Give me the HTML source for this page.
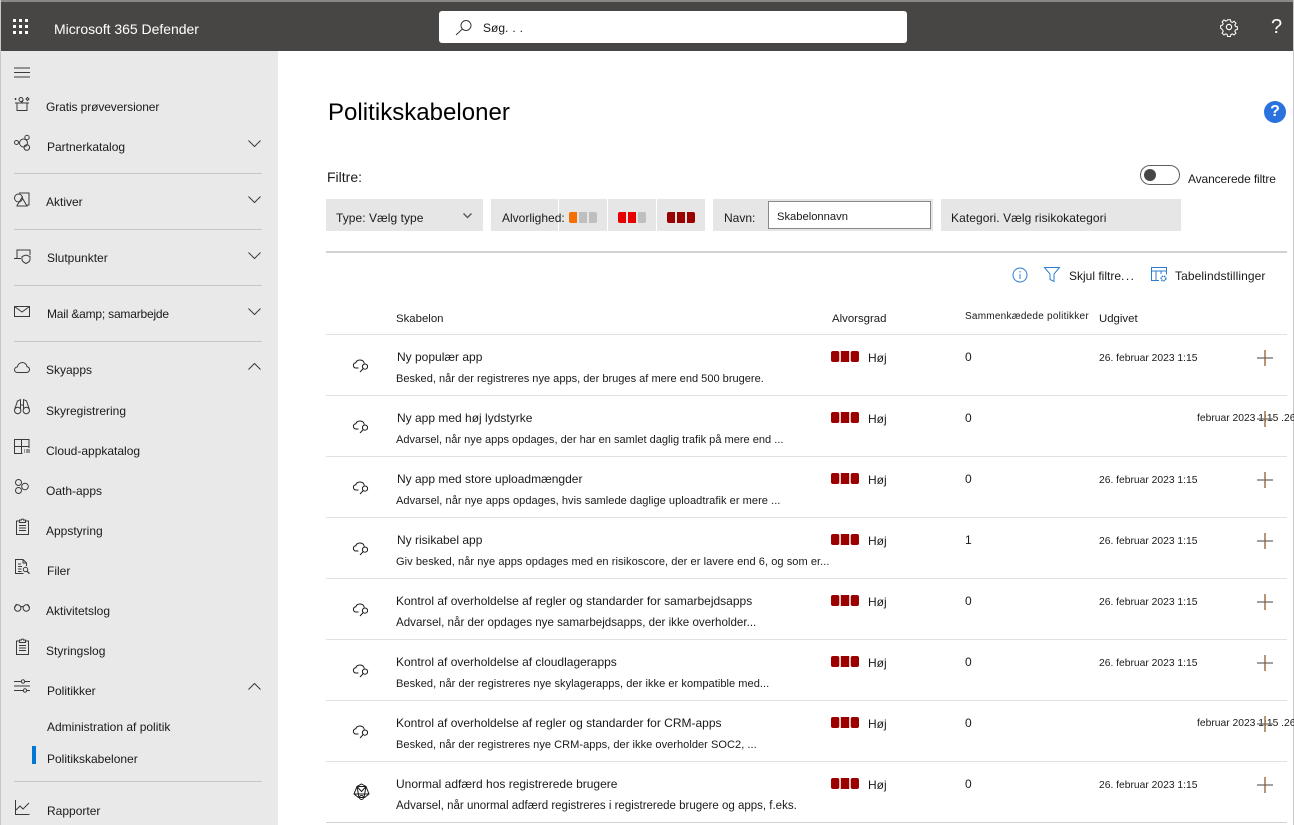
<!DOCTYPE html>
<html lang="da">
<head>
<meta charset="utf-8">
<title>Politikskabeloner</title>
<style>
html,body{margin:0;padding:0;background:#fff}
body{width:1294px;height:825px;position:relative;overflow:hidden;font-family:"Liberation Sans",sans-serif;font-size:12px;color:#1b1a19}
.a{position:absolute;white-space:nowrap;line-height:16px}
.b{position:absolute}
svg{position:absolute;overflow:visible;fill:none;stroke:#3b3a39;stroke-width:1}
.nav{left:46px}
.div{position:absolute;left:14px;width:248px;height:1px;background:#c8c6c4}
.sep{position:absolute;left:326px;width:961px;height:1px;background:#e1e1e1}
.f{position:absolute;top:199px;height:32px;background:#e6e6e6}
.sq{position:absolute;width:8px;height:11px;background:#9b0000}
.d{font-size:11.05px;margin-top:1px}
.t{font-size:10.3px;margin-top:1px}
.h{font-size:11.4px;margin-top:1px}
</style>
</head>
<body>
<!-- frame -->
<div class="b" style="left:0;top:0;width:1294px;height:2px;background:#8a8886"></div>
<div class="b" style="left:0;top:0;width:1px;height:825px;background:#c8c8c8"></div>
<div class="b" style="left:1293px;top:0;width:1px;height:825px;background:#c8c8c8"></div>
<!-- header -->
<div class="b" style="left:1px;top:2px;width:1292px;height:49px;background:#484644"></div>
<div class="b" style="left:13px;top:19px;width:3px;height:3px;background:#fff;box-shadow:6px 0 #fff,12px 0 #fff,0 6px #fff,6px 6px #fff,12px 6px #fff,0 12px #fff,6px 12px #fff,12px 12px #fff"></div>
<div class="a" style="left:54px;top:21px;color:#fff;font-size:14px;letter-spacing:-.03px">Microsoft 365 Defender</div>
<div class="b" style="left:439px;top:11px;width:468px;height:32px;background:#fff;border-radius:3px"></div>
<svg style="left:455px;top:19px" width="18" height="18" viewBox="0 0 18 18"><circle cx="11" cy="6.500" r="5"/><path d="M7.400 10 1 16"/></svg>
<div class="a" style="left:483px;top:20px;font-size:12px;color:#1b1a19">Søg<span style="letter-spacing:4px">...</span></div>
<svg style="left:1220px;top:18px;stroke:#fff;stroke-width:1.200" width="18" height="18" viewBox="0 0 18 18"><circle cx="9" cy="9" r="2.600"/><path d="M7.400 1h3.200l.5 2.300 1.600.7 2-1.300 2.200 2.200-1.300 2 .7 1.600 2.200.5v3l-2.200.5-.7 1.600 1.300 2-2.200 2.200-2-1.300-1.600.7-.5 2.300H7.400l-.5-2.300-1.600-.7-2 1.300-2.200-2.200 1.300-2-.7-1.600L-.5 10.500v-3l2.200-.5.7-1.600-1.300-2 2.200-2.200 2 1.300 1.600-.7z" transform="translate(1.100 .9) scale(.88)"/></svg>
<div class="a" style="left:1271px;top:17px;color:#fff;font-size:20px;line-height:20px">?</div>

<!-- sidebar -->
<div class="b" style="left:1px;top:51px;width:277px;height:774px;background:#e9e9e9"></div>
<svg style="left:14px;top:67px" width="16" height="11" viewBox="0 0 16 11"><path d="M0 1h16M0 5.500h16M0 10h16"/></svg>

<svg style="left:14px;top:96px" width="16" height="16" viewBox="0 0 16 16"><path d="M1 7h14M3 7v7.500h10V7M.5 3h2M1.500 2v2M12 3l1.500-1.500L15 3l-1.500 1.500z"/><circle cx="7" cy="3.500" r="2"/><path d="M9 3.500c0 2-1 3-2 3"/></svg>
<div class="a nav" style="top:99px;letter-spacing:-.1px">Gratis prøveversioner</div>

<svg style="left:14px;top:135px" width="16" height="17" viewBox="0 0 16 17"><circle cx="2.500" cy="7.500" r="2"/><circle cx="9.500" cy="8" r="4"/><circle cx="13" cy="2.500" r="2.200"/><circle cx="12.800" cy="12.500" r="2.800"/></svg>
<div class="a" style="left:47px;top:139px">Partnerkatalog</div>
<svg style="left:248px;top:140px" width="13" height="7" viewBox="0 0 13 7"><path d="M.5.500l6 6 6-6"/></svg>
<div class="div" style="top:173px"></div>

<svg style="left:14px;top:192px" width="16" height="16" viewBox="0 0 16 16"><circle cx="4.500" cy="6" r="4"/><path d="M5 1h10v12h-2M3 13.500l5-8 5 8.500H3z"/></svg>
<div class="a nav" style="top:194px">Aktiver</div>
<svg style="left:248px;top:196px" width="13" height="7" viewBox="0 0 13 7"><path d="M.5.500l6 6 6-6"/></svg>
<div class="div" style="top:229px"></div>

<svg style="left:14px;top:249px" width="16" height="16" viewBox="0 0 16 16"><path d="M3 9V1h13v5M0 9.500h7"/><path d="M8 7.500l4-1.500 4 1.500v3c0 2-2 3-4 4-2-1-4-2-4-4z"/></svg>
<div class="a" style="left:47px;top:250px">Slutpunkter</div>
<svg style="left:248px;top:252px" width="13" height="7" viewBox="0 0 13 7"><path d="M.5.500l6 6 6-6"/></svg>
<div class="div" style="top:285px"></div>

<svg style="left:14px;top:306px" width="16" height="12" viewBox="0 0 16 12"><path d="M.5.500h15v10H.5zM.5.500 8 6l7.500-5.500"/></svg>
<div class="a" style="left:47px;top:306px;letter-spacing:-.2px">Mail &amp;amp; samarbejde</div>
<svg style="left:248px;top:308px" width="13" height="7" viewBox="0 0 13 7"><path d="M.5.500l6 6 6-6"/></svg>
<div class="div" style="top:341px"></div>

<svg style="left:14px;top:362px" width="16" height="11" viewBox="0 0 16 11"><path d="M3.500 10.500C1.500 10.500.5 9.200.5 7.800.5 6.200 1.800 5 3.300 5 3.800 2.500 5.800.500 8.300.500c2.600 0 4.400 1.800 4.700 4.200 1.500.2 2.500 1.300 2.500 2.800 0 1.700-1.300 3-3 3z"/></svg>
<div class="a nav" style="top:362px">Skyapps</div>
<svg style="left:248px;top:363px" width="13" height="7" viewBox="0 0 13 7"><path d="M.5 6.500l6-6 6 6"/></svg>

<svg style="left:14px;top:399px" width="16" height="16" viewBox="0 0 16 16"><circle cx="3.700" cy="11.500" r="3.200"/><circle cx="12.300" cy="11.500" r="3.200"/><path d="M.6 10.500 3.500 2 6.500.6v10M15.400 10.500 12.500 2 9.500.6v10M6.500 6h3"/></svg>
<div class="a nav" style="top:403px">Skyregistrering</div>

<svg style="left:14px;top:439px" width="16" height="16" viewBox="0 0 16 16"><path d="M8.500 14.500H.5V.500h14.500v8.500M7.500.500v14M.5 7.500h14.500M10 11h1M12 11h4M10 13h1M12 13h4"/></svg>
<div class="a nav" style="top:443px">Cloud-appkatalog</div>

<svg style="left:14px;top:479px" width="16" height="16" viewBox="0 0 16 16"><circle cx="4.500" cy="3.500" r="3"/><circle cx="4.500" cy="11.500" r="3"/><circle cx="11" cy="7.500" r="3.300"/></svg>
<div class="a nav" style="top:483px">Oath-apps</div>

<svg style="left:16px;top:519px" width="13" height="16" viewBox="0 0 13 16"><path d="M3.500 2H.5v13.500h12V2h-3M3.500 3.500V1h2a1 1 0 0 1 2 0h2v2.500zM3 6.500h7M3 9h7M3 11.500h7"/></svg>
<div class="a nav" style="top:523px">Appstyring</div>

<svg style="left:15px;top:559px" width="16" height="16" viewBox="0 0 16 16"><path d="M8.500 14.500H.5V.500H8l3.500 3.500v3M8 .500v3.500h3.500M3 5h3M3 7.500h4M3 10h3.500M3 12.500h3.500"/><circle cx="10.500" cy="10.500" r="2.200"/><path d="M12 12.200l2.500 2.500" stroke-width="1.300"/></svg>
<div class="a" style="left:47px;top:563px">Filer</div>

<svg style="left:14px;top:603px" width="16" height="9" viewBox="0 0 16 9"><circle cx="3.700" cy="5" r="3.200"/><circle cx="12.300" cy="5" r="3.200"/><path d="M6.800 4c.8-.6 1.600-.6 2.400 0M.5 5 2.500 1M15.500 5l-2-4"/></svg>
<div class="a nav" style="top:603px">Aktivitetslog</div>

<svg style="left:16px;top:639px" width="13" height="16" viewBox="0 0 13 16"><path d="M3.500 2H.5v13.500h12V2h-3M3.500 3.500V1h2a1 1 0 0 1 2 0h2v2.500zM3 6.500h7M3 9h7M3 11.500h7"/></svg>
<div class="a nav" style="top:643px">Styringslog</div>

<svg style="left:14px;top:679px" width="16" height="14" viewBox="0 0 16 14"><path d="M0 2.500h7M11 2.500h5M0 7h16M0 11.500h9M13 11.500h3"/><circle cx="9" cy="2.500" r="1.700"/><circle cx="11" cy="11.500" r="1.700"/></svg>
<div class="a" style="left:47px;top:683px">Politikker</div>
<svg style="left:248px;top:683px" width="13" height="7" viewBox="0 0 13 7"><path d="M.5 6.500l6-6 6 6"/></svg>
<div class="a" style="left:47px;top:719px">Administration af politik</div>
<div class="b" style="left:32px;top:746px;width:4px;height:18px;background:#0078d4"></div>
<div class="a" style="left:47px;top:751px">Politikskabeloner</div>
<div class="div" style="top:781px"></div>
<svg style="left:15px;top:800px" width="15" height="15" viewBox="0 0 15 15"><path d="M.5 0v14.500h14M1 10l4-4 3 3 6-6"/></svg>
<div class="a" style="left:47px;top:803px">Rapporter</div>

<!-- main -->
<div class="a" style="left:328px;top:99px;font-size:24px;line-height:28px;color:#000;letter-spacing:.03px">Politikskabeloner</div>
<div class="b" style="left:1264px;top:101px;width:22px;height:22px;border-radius:50%;background:#2a72de;color:#fff;font-weight:bold;font-size:16px;line-height:22px;text-align:center">?</div>
<div class="a" style="left:327px;top:169px;font-size:14px">Filtre:</div>
<div class="b" style="left:1140px;top:165px;width:38px;height:18px;border:1px solid #605e5c;border-radius:10px"></div>
<div class="b" style="left:1144px;top:169px;width:12px;height:12px;border-radius:50%;background:#484644"></div>
<div class="a" style="left:1188px;top:171px;letter-spacing:-.12px">Avancerede filtre</div>

<div class="f" style="left:326px;width:157px"></div>
<div class="a" style="left:336px;top:210px;letter-spacing:.05px">Type: Vælg type</div>
<svg style="left:463px;top:213px;stroke:#605e5c;stroke-width:1.500" width="9" height="6" viewBox="0 0 9 6"><path d="M.5.500l4 4 4-4"/></svg>

<div class="f" style="left:491px;width:67px"></div>
<div class="f" style="left:559px;width:48px"></div>
<div class="f" style="left:608px;width:48px"></div>
<div class="f" style="left:657px;width:48px"></div>
<div class="a" style="left:502px;top:210px">Alvorlighed:</div>
<div class="sq" style="left:569px;top:212px;background:#f57000;border-radius:2px 0 0 2px"></div>
<div class="sq" style="left:579px;top:212px;background:#bfbfbf"></div>
<div class="sq" style="left:589px;top:212px;background:#bfbfbf;border-radius:0 2px 2px 0"></div>
<div class="sq" style="left:618px;top:212px;background:#e80000;border-radius:2px 0 0 2px"></div>
<div class="sq" style="left:628px;top:212px;background:#e80000"></div>
<div class="sq" style="left:638px;top:212px;background:#bfbfbf;border-radius:0 2px 2px 0"></div>
<div class="sq" style="left:667px;top:212px;border-radius:2px 0 0 2px"></div>
<div class="sq" style="left:677px;top:212px"></div>
<div class="sq" style="left:687px;top:212px;border-radius:0 2px 2px 0"></div>

<div class="f" style="left:713px;width:220px"></div>
<div class="a" style="left:724px;top:210px">Navn:</div>
<div class="b" style="left:768px;top:201px;width:161px;height:26px;background:#fff;border:1px solid #8a8886"></div>
<div class="a" style="left:777px;top:209px;font-size:11.200px">Skabelonnavn</div>
<div class="f" style="left:941px;width:240px"></div>
<div class="a" style="left:951px;top:210px;letter-spacing:.07px">Kategori. Vælg risikokategori</div>
<div class="b" style="left:326px;top:251px;width:961px;height:2px;background:#d2d2d2"></div>

<svg style="left:1012px;top:267px;stroke:#2b7cd3" width="16" height="16" viewBox="0 0 16 16"><circle cx="8" cy="8" r="7"/><path d="M8 7v5M8 4v1.500"/></svg>
<svg style="left:1044px;top:267px;stroke:#2b7cd3" width="16" height="15" viewBox="0 0 16 15"><path d="M.5.500h15L10 7v7.500l-4-2V7z"/></svg>
<div class="a" style="left:1069px;top:268px">Skjul filtre<span style="letter-spacing:1.500px">...</span></div>
<svg style="left:1151px;top:267px;stroke:#2b7cd3" width="16" height="15" viewBox="0 0 16 15"><path d="M8 13.500H.5V.500h15v7M.5 4h15M5 4v9.500M10 4v3"/><circle cx="12.500" cy="11.500" r="2.300" stroke-dasharray="1.500 .7" stroke-width="1.500"/></svg>
<div class="a" style="left:1175px;top:268px;letter-spacing:.1px">Tabelindstillinger</div>

<div class="a h" style="left:396px;top:310px">Skabelon</div>
<div class="a h" style="left:832px;top:310px">Alvorsgrad</div>
<div class="a" style="left:965px;top:309px;font-size:10px;letter-spacing:.24px">Sammenkædede politikker</div>
<div class="a h" style="left:1099px;top:310px">Udgivet</div>

<div class="sep" style="top:334px"></div>
<div class="sep" style="top:395px"></div>
<div class="sep" style="top:456px"></div>
<div class="sep" style="top:517px"></div>
<div class="sep" style="top:578px"></div>
<div class="sep" style="top:639px"></div>
<div class="sep" style="top:700px"></div>
<div class="sep" style="top:761px"></div>
<div class="sep" style="top:822px;background:#d2d2d2"></div>

<svg width="0" height="0" style="left:0;top:0"><defs>
<g id="cl"><path d="M5.500 11H3C1.400 11 .4 9.800.4 8.400.4 7 1.400 6 2.800 5.800 3.300 4 5 3 7 3c2.300 0 3.900 1.400 4.300 3.500"/><circle cx="12" cy="9.600" r="2.600"/><path d="M10.200 11.600 7 15"/></g>
<g id="pl"><path d="M0 8h16" stroke="#6e6e6e" stroke-width="1.300"/><path d="M8 0v16" stroke="#8f5d2c" stroke-width="1.300"/></g>
<g id="hi"><rect x="0" y="0" width="8.300" height="11" rx="2" fill="#9b0000" stroke="none"/><rect x="9.800" y="0" width="8.400" height="11" fill="#9b0000" stroke="none"/><rect x="19.700" y="0" width="8.300" height="11" rx="2" fill="#9b0000" stroke="none"/></g>
</defs></svg>

<!-- row 1 -->
<svg style="left:353px;top:357px;stroke:#1b1a19" width="17" height="16" viewBox="0 0 17 16"><use href="#cl"/></svg>
<div class="a" style="left:397px;top:349px">Ny populær app</div>
<div class="a d" style="left:396px;top:370px">Besked, når der registreres nye apps, der bruges af mere end 500 brugere.</div>
<svg style="left:831px;top:351px" width="28" height="11" viewBox="0 0 28 11"><use href="#hi"/></svg>
<div class="a" style="left:868px;top:350px">Høj</div>
<div class="a" style="left:965px;top:349px">0</div>
<div class="a t" style="left:1099px;top:350px">26. februar 2023 1:15</div>
<svg style="left:1257px;top:350px" width="16" height="16" viewBox="0 0 16 16"><use href="#pl"/></svg>

<!-- row 2 -->
<svg style="left:353px;top:418px;stroke:#1b1a19" width="17" height="16" viewBox="0 0 17 16"><use href="#cl"/></svg>
<div class="a" style="left:397px;top:410px">Ny app med høj lydstyrke</div>
<div class="a d" style="left:396px;top:431px">Advarsel, når nye apps opdages, der har en samlet daglig trafik på mere end ...</div>
<svg style="left:831px;top:412px" width="28" height="11" viewBox="0 0 28 11"><use href="#hi"/></svg>
<div class="a" style="left:868px;top:411px">Høj</div>
<div class="a" style="left:965px;top:410px">0</div>
<div class="a t" style="left:1197px;top:410px">februar 2023 1:15 .26</div>
<svg style="left:1257px;top:411px" width="16" height="16" viewBox="0 0 16 16"><use href="#pl"/></svg>

<!-- row 3 -->
<svg style="left:353px;top:479px;stroke:#1b1a19" width="17" height="16" viewBox="0 0 17 16"><use href="#cl"/></svg>
<div class="a" style="left:397px;top:471px">Ny app med store uploadmængder</div>
<div class="a d" style="left:396px;top:492px;letter-spacing:.04px">Advarsel, når nye apps opdages, hvis samlede daglige uploadtrafik er mere ...</div>
<svg style="left:831px;top:473px" width="28" height="11" viewBox="0 0 28 11"><use href="#hi"/></svg>
<div class="a" style="left:868px;top:472px">Høj</div>
<div class="a" style="left:965px;top:471px">0</div>
<div class="a t" style="left:1099px;top:472px">26. februar 2023 1:15</div>
<svg style="left:1257px;top:472px" width="16" height="16" viewBox="0 0 16 16"><use href="#pl"/></svg>

<!-- row 4 -->
<svg style="left:353px;top:540px;stroke:#1b1a19" width="17" height="16" viewBox="0 0 17 16"><use href="#cl"/></svg>
<div class="a" style="left:397px;top:532px">Ny risikabel app</div>
<div class="a d" style="left:396px;top:553px;letter-spacing:.05px">Giv besked, når nye apps opdages med en risikoscore, der er lavere end 6, og som er...</div>
<svg style="left:831px;top:534px" width="28" height="11" viewBox="0 0 28 11"><use href="#hi"/></svg>
<div class="a" style="left:868px;top:533px">Høj</div>
<div class="a" style="left:965px;top:532px">1</div>
<div class="a t" style="left:1099px;top:533px">26. februar 2023 1:15</div>
<svg style="left:1257px;top:533px" width="16" height="16" viewBox="0 0 16 16"><use href="#pl"/></svg>

<!-- row 5 -->
<svg style="left:353px;top:601px;stroke:#1b1a19" width="17" height="16" viewBox="0 0 17 16"><use href="#cl"/></svg>
<div class="a" style="left:396px;top:593px">Kontrol af overholdelse af regler og standarder for samarbejdsapps</div>
<div class="a d" style="left:396px;top:614px;font-size:11.600px">Advarsel, når der opdages nye samarbejdsapps, der ikke overholder...</div>
<svg style="left:831px;top:595px" width="28" height="11" viewBox="0 0 28 11"><use href="#hi"/></svg>
<div class="a" style="left:868px;top:594px">Høj</div>
<div class="a" style="left:965px;top:593px">0</div>
<div class="a t" style="left:1099px;top:594px">26. februar 2023 1:15</div>
<svg style="left:1257px;top:594px" width="16" height="16" viewBox="0 0 16 16"><use href="#pl"/></svg>

<!-- row 6 -->
<svg style="left:353px;top:662px;stroke:#1b1a19" width="17" height="16" viewBox="0 0 17 16"><use href="#cl"/></svg>
<div class="a" style="left:396px;top:654px">Kontrol af overholdelse af cloudlagerapps</div>
<div class="a d" style="left:396px;top:675px;letter-spacing:.04px">Besked, når der registreres nye skylagerapps, der ikke er kompatible med...</div>
<svg style="left:831px;top:656px" width="28" height="11" viewBox="0 0 28 11"><use href="#hi"/></svg>
<div class="a" style="left:868px;top:655px">Høj</div>
<div class="a" style="left:965px;top:654px">0</div>
<div class="a t" style="left:1099px;top:655px">26. februar 2023 1:15</div>
<svg style="left:1257px;top:655px" width="16" height="16" viewBox="0 0 16 16"><use href="#pl"/></svg>

<!-- row 7 -->
<svg style="left:353px;top:723px;stroke:#1b1a19" width="17" height="16" viewBox="0 0 17 16"><use href="#cl"/></svg>
<div class="a" style="left:396px;top:715px">Kontrol af overholdelse af regler og standarder for CRM-apps</div>
<div class="a d" style="left:396px;top:736px;letter-spacing:.03px">Besked, når der registreres nye CRM-apps, der ikke overholder SOC2, ...</div>
<svg style="left:831px;top:717px" width="28" height="11" viewBox="0 0 28 11"><use href="#hi"/></svg>
<div class="a" style="left:868px;top:716px">Høj</div>
<div class="a" style="left:965px;top:715px">0</div>
<div class="a t" style="left:1197px;top:715px">februar 2023 1:15 .26</div>
<svg style="left:1257px;top:716px" width="16" height="16" viewBox="0 0 16 16"><use href="#pl"/></svg>

<!-- row 8 -->
<svg style="left:353px;top:783px;stroke:#1b1a19" width="17" height="17" viewBox="0 0 17 17"><path d="M8.500 1 13 3.500l3 7.500-4.500 3.500h-6L1 11l3-7.500zM4 3.500 13 3.500M1 11l15 0M4 3.500l2 11M13 3.500l-2 11M4 3.500l4.500 5 4.500-5"/><circle cx="8.500" cy="14.500" r="2"/></svg>
<div class="a" style="left:396px;top:776px">Unormal adfærd hos registrerede brugere</div>
<div class="a d" style="left:396px;top:797px;font-size:11.500px">Advarsel, når unormal adfærd registreres i registrerede brugere og apps, f.eks.</div>
<svg style="left:831px;top:778px" width="28" height="11" viewBox="0 0 28 11"><use href="#hi"/></svg>
<div class="a" style="left:868px;top:777px">Høj</div>
<div class="a" style="left:965px;top:776px">0</div>
<div class="a t" style="left:1099px;top:777px">26. februar 2023 1:15</div>
<svg style="left:1257px;top:777px" width="16" height="16" viewBox="0 0 16 16"><use href="#pl"/></svg>
</body>
</html>
